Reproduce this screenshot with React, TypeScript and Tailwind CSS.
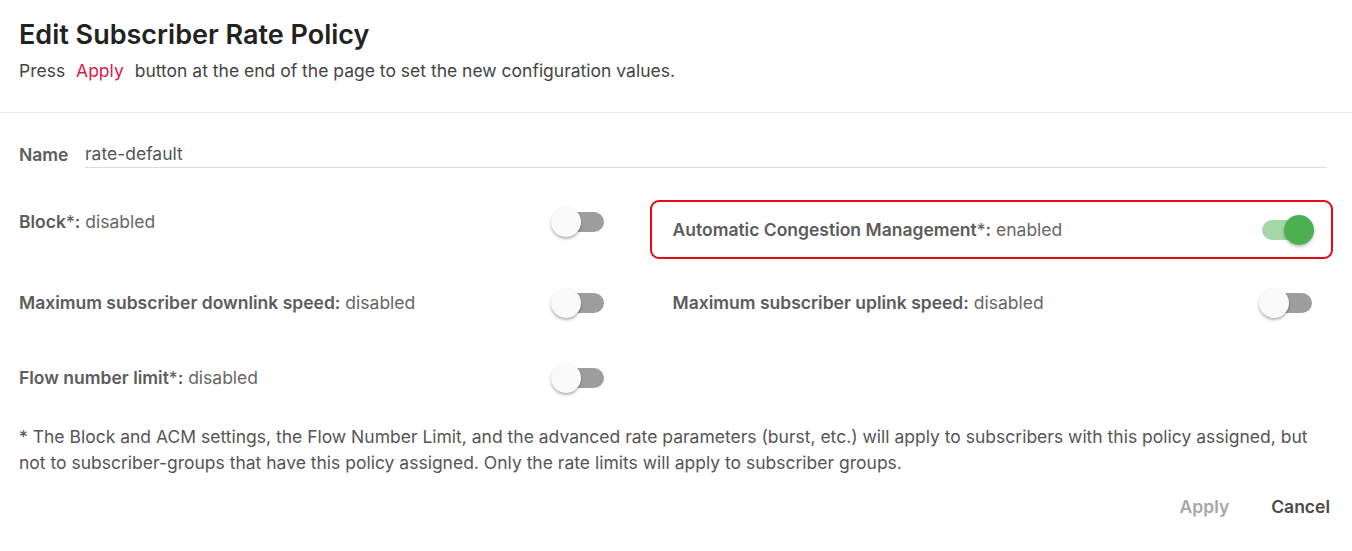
import React from 'react';

const Toggle = ({ on }: { on?: boolean }) => {
  return (
    <div className="relative h-[30px] w-[54px] shrink-0">
      <div
        className={
          on
            ? 'absolute left-[2px] top-[5px] h-[20px] w-[48px] rounded-full bg-[#a5d6a7]'
            : 'absolute left-[4px] top-[5px] h-[20px] w-[49px] rounded-full bg-[#9e9e9e]'
        }
      />
      <div
        className={
          on
            ? 'absolute right-0 top-0 h-[30px] w-[30px] rounded-full bg-[#4caf50] shadow-[0_2px_3px_rgba(0,0,0,0.25)]'
            : 'absolute left-0 top-0 h-[30px] w-[30px] rounded-full bg-[#fafafa] shadow-[0_2px_3px_rgba(0,0,0,0.3)]'
        }
      />
    </div>
  );
};

const Setting = ({ label, star, value }: { label: string; star?: boolean; value: string }) => (
  <span className="text-[17.5px] text-[#666]">
    <span className="font-semibold text-[#5c5c5c]">
      {label}
      {star && <span className="font-normal">*</span>}:
    </span>{' '}
    {value}
  </span>
);

export default function App() {
  return (
    <div className="min-h-screen bg-white font-['Inter',sans-serif]">
      <div className="border-b border-[#e6e6e6] px-[19px] pb-[29px] pt-[19px]">
        <h1 className="text-[27px] font-semibold leading-[32px] text-[#222]">Edit Subscriber Rate Policy</h1>
        <p className="mt-[8px] text-[17.5px] leading-[24px] text-[#444]">
          Press <span className="mx-[6px] text-[#d81b4c]">Apply</span> button at the end of the page to set the new
          configuration values.
        </p>
      </div>

      <div className="px-[19px]">
        <div className="mt-[29px] flex items-center">
          <span className="w-[66px] text-[17.5px] font-semibold text-[#5c5c5c]">Name</span>
          <div className="mr-[6px] flex-1 border-b border-[#dcdcdc] pb-[1px] text-[17.5px] leading-[24px] text-[#555]">
            rate-default
          </div>
        </div>

        <div className="mt-[32px] flex items-start">
          <div className="flex h-[44px] w-[586px] items-center justify-between">
            <Setting label="Block" star value="disabled" />
            <Toggle />
          </div>
          <div className="ml-[45px] flex h-[59px] w-[684px] items-center justify-between rounded-[9px] border-2 border-[#e50914] pl-[21px] pr-[17px]">
            <Setting label="Automatic Congestion Management" star value="enabled" />
            <Toggle on />
          </div>
        </div>

        <div className="mt-[22px] flex items-center">
          <div className="flex h-[44px] w-[586px] items-center justify-between">
            <Setting label="Maximum subscriber downlink speed" value="disabled" />
            <Toggle />
          </div>
          <div className="ml-[45px] flex h-[44px] w-[684px] items-center justify-between pl-[23px] pr-[20px]">
            <Setting label="Maximum subscriber uplink speed" value="disabled" />
            <Toggle />
          </div>
        </div>

        <div className="mt-[31px] flex items-center">
          <div className="flex h-[44px] w-[586px] items-center justify-between">
            <Setting label="Flow number limit" star value="disabled" />
            <Toggle />
          </div>
        </div>

        <p className="mt-[24px] pr-[20px] text-[17.5px] leading-[26px] text-[#555]">
          * The Block and ACM settings, the Flow Number Limit, and the advanced rate parameters (burst, etc.) will apply
          to subscribers with this policy assigned, but not to subscriber-groups that have this policy assigned. Only the
          rate limits will apply to subscriber groups.
        </p>

        <div className="mt-[18px] flex justify-end gap-[42px] pr-[3px] text-[17.5px] font-semibold">
          <button className="text-[#a6a6a6]">Apply</button>
          <button className="text-[#4a4a4a]">Cancel</button>
        </div>
      </div>
    </div>
  );
}
